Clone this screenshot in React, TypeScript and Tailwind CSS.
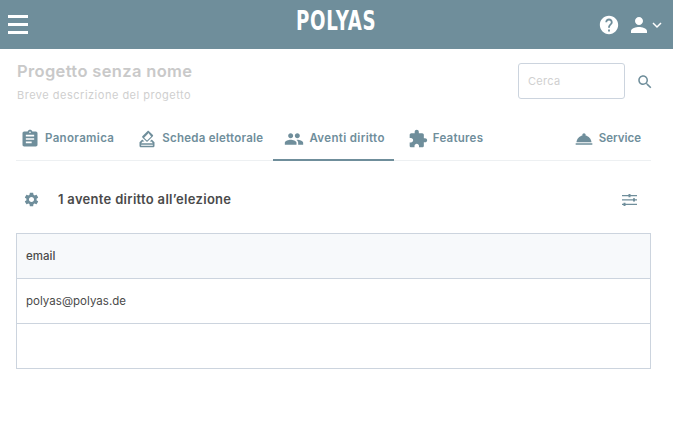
const slate = "#6f8e9b";

function Icon({ d, className }: { d: string; className?: string }) {
  return (
    <svg viewBox="0 0 24 24" fill="currentColor" className={className}>
      <path d={d} />
    </svg>
  );
}

const icons = {
  assignment:
    "M19 3h-4.18C14.4 1.84 13.3 1 12 1c-1.3 0-2.4.84-2.82 2H5c-1.1 0-2 .9-2 2v14c0 1.1.9 2 2 2h14c1.1 0 2-.9 2-2V5c0-1.1-.9-2-2-2zm-7 0c.55 0 1 .45 1 1s-.45 1-1 1-1-.45-1-1 .45-1 1-1zm2 14H7v-2h7v2zm3-4H7v-2h10v2zm0-4H7V7h10v2z",
  vote:
    "M18 13h-.68l-2 2h1.91L19 17H5l1.78-2h2.05l-2-2H6l-3 3v4c0 1.1.89 2 1.99 2H19c1.1 0 2-.89 2-2v-4l-3-3zm1 7H5v-1h14v1zm-7.66-4.98c.39.39 1.02.39 1.41 0l6.36-6.36c.39-.39.39-1.02 0-1.41L14.16 2.3c-.38-.4-1.01-.4-1.4-.01L6.39 8.66c-.39.39-.39 1.02 0 1.41l4.95 4.95zm2.12-10.61L17 8.95l-4.95 4.95-3.54-3.54 4.95-4.95z",
  people:
    "M16 11c1.66 0 2.99-1.34 2.99-3S17.66 5 16 5c-1.66 0-3 1.34-3 3s1.34 3 3 3zm-8 0c1.66 0 2.99-1.34 2.99-3S9.66 5 8 5C6.34 5 5 6.34 5 8s1.34 3 3 3zm0 2c-2.33 0-7 1.17-7 3.5V19h14v-2.5c0-2.33-4.67-3.5-7-3.5zm8 0c-.29 0-.62.02-.97.05 1.16.84 1.97 1.97 1.97 3.45V19h6v-2.5c0-2.33-4.67-3.5-7-3.5z",
  extension:
    "M20.5 11H19V7c0-1.1-.9-2-2-2h-4V3.5C13 2.12 11.88 1 10.5 1S8 2.12 8 3.5V5H4c-1.1 0-1.99.9-1.99 2v3.8H3.5c1.49 0 2.7 1.21 2.7 2.7s-1.21 2.7-2.7 2.7H2V20c0 1.1.9 2 2 2h3.8v-1.5c0-1.49 1.21-2.7 2.7-2.7 1.49 0 2.7 1.21 2.7 2.7V22H17c1.1 0 2-.9 2-2v-4h1.5c1.38 0 2.5-1.12 2.5-2.5S21.88 11 20.5 11z",
  service:
    "M2 17h20v2H2zm11.84-9.21c.1-.24.16-.51.16-.79 0-1.1-.9-2-2-2s-2 .9-2 2c0 .28.06.55.16.79C6.25 8.6 3.27 11.93 3 16h18c-.27-4.07-3.25-7.4-7.16-8.21z",
  settings:
    "M19.14 12.94c.04-.3.06-.61.06-.94 0-.32-.02-.64-.07-.94l2.03-1.58c.18-.14.23-.41.12-.61l-1.92-3.32c-.12-.22-.37-.29-.59-.22l-2.39.96c-.5-.38-1.03-.7-1.62-.94l-.36-2.54c-.04-.24-.24-.41-.48-.41h-3.84c-.24 0-.43.17-.47.41l-.36 2.54c-.59.24-1.13.57-1.62.94l-2.39-.96c-.22-.08-.47 0-.59.22L2.74 8.87c-.12.21-.08.47.12.61l2.03 1.58c-.05.3-.09.63-.09.94s.02.64.07.94l-2.03 1.58c-.18.14-.23.41-.12.61l1.92 3.32c.12.22.37.29.59.22l2.39-.96c.5.38 1.03.7 1.62.94l.36 2.54c.05.24.24.41.48.41h3.84c.24 0 .44-.17.47-.41l.36-2.54c.59-.24 1.13-.56 1.62-.94l2.39.96c.22.08.47 0 .59-.22l1.92-3.32c.12-.22.07-.47-.12-.61l-2.01-1.58zM12 15.6c-1.98 0-3.6-1.62-3.6-3.6s1.62-3.6 3.6-3.6 3.6 1.62 3.6 3.6-1.62 3.6-3.6 3.6z",
  help:
    "M12 2C6.48 2 2 6.48 2 12s4.48 10 10 10 10-4.48 10-10S17.52 2 12 2zm1 17h-2v-2h2v2zm2.07-7.75l-.9.92C13.45 12.9 13 13.5 13 15h-2v-.5c0-1.1.45-2.1 1.17-2.83l1.24-1.26c.37-.36.59-.86.59-1.41 0-1.1-.9-2-2-2s-2 .9-2 2H8c0-2.21 1.79-4 4-4s4 1.79 4 4c0 .88-.36 1.68-.93 2.25z",
  person:
    "M12 12c2.21 0 4-1.79 4-4s-1.79-4-4-4-4 1.79-4 4 1.79 4 4 4zm0 2c-2.67 0-8 1.34-8 4v2h16v-2c0-2.66-5.33-4-8-4z",
  search:
    "M15.5 14h-.79l-.28-.27C15.41 12.59 16 11.11 16 9.5 16 5.91 13.09 3 9.5 3S3 5.91 3 9.5 5.91 16 9.5 16c1.61 0 3.09-.59 4.23-1.57l.27.28v.79l5 4.99L20.49 19l-4.99-5zm-6 0C7.01 14 5 11.99 5 9.5S7.01 5 9.5 5 14 7.01 14 9.5 11.99 14 9.5 14z",
};

function Tab({ icon, label, active, className }: { icon: string; label: string; active?: boolean; className?: string }) {
  return (
    <div
      className={`-mb-px flex h-[47px] items-center gap-[5px] border-b-2 pt-1 text-[11.5px] font-semibold ${
        active ? "border-[#6f8e9b]" : "border-transparent"
      } ${className ?? ""}`}
    >
      <Icon d={icon} className="h-5 w-5 shrink-0" />
      <span>{label}</span>
    </div>
  );
}

export default function App() {
  return (
    <div className="min-h-[440px] bg-white font-['Inter',sans-serif]" style={{ color: slate }}>
      <header className="relative flex h-[49px] items-center justify-between bg-[#6f8e9b] pl-2 pr-[10px] text-white">
        <div className="flex w-5 flex-col gap-[5.5px]">
          <div className="h-[2.5px] bg-white" />
          <div className="h-[2.5px] bg-white" />
          <div className="h-[2.5px] bg-white" />
        </div>
        <span className="absolute left-[296px] top-[5px] origin-left scale-x-[0.7] font-['DejaVu_Sans',sans-serif] text-[26px] font-bold leading-[32px] tracking-[1px]">
          POLYAS
        </span>
        <div className="flex items-center">
          <Icon d={icons.help} className="h-[22px] w-[22px]" />
          <Icon d={icons.person} className="ml-[7px] h-6 w-6" />
          <svg viewBox="0 0 12 12" className="h-3 w-3" fill="none" stroke="currentColor" strokeWidth="1.5">
            <path d="M2 4l4 4 4-4" />
          </svg>
        </div>
      </header>

      <main className="pl-4 pr-[22px]">
        <div className="flex items-start justify-between pt-[14px]">
          <div className="pl-px">
            <h1 className="text-[16.5px] font-semibold leading-[16px] tracking-[0.35px] text-[#c9c9c9]">Progetto senza nome</h1>
            <p className="mt-[9px] text-[11px] leading-[14px] tracking-[0.5px] text-[#cfcfcf]">Breve descrizione del progetto</p>
          </div>
          <div className="flex items-center">
            <div className="flex h-9 w-[107px] items-center rounded-[3px] border border-[#ccd4de] pl-[9px] text-[11px] tracking-[0.3px] text-[#d0d0d0]">
              Cerca
            </div>
            <Icon d={icons.search} className="ml-[11px] mr-[-3px] mt-[2px] h-[18px] w-[18px]" />
          </div>
        </div>

        <nav className="mt-3 flex border-b border-[#edf0f2]">
          <Tab icon={icons.assignment} label="Panoramica" className="pl-1 pr-[12px] tracking-[0.35px]" />
          <Tab icon={icons.vote} label="Scheda elettorale" className="pl-[11px] pr-[10px] tracking-[0.25px]" />
          <Tab icon={icons.people} label="Aventi diritto" active className="pl-[11px] pr-[9px] tracking-[0.35px]" />
          <Tab icon={icons.extension} label="Features" className="pl-[14px] tracking-[0.25px]" />
          <Tab icon={icons.service} label="Service" className="ml-auto pr-[10px] tracking-[0px]" />
        </nav>

        <div className="flex h-[72px] items-center justify-between pl-[7px] pr-[14px] pt-[5px]">
          <div className="flex items-center gap-[18px]">
            <Icon d={icons.settings} className="h-[17px] w-[17px]" />
            <span className="text-[13px] font-semibold tracking-[0.3px] text-[#4a4a4a]">1 avente diritto all’elezione</span>
          </div>
          <svg viewBox="0 0 15 12" className="h-3 w-[15px]" fill="currentColor">
            <path d="M0 1h15v1.3H0zM0 5.3h15v1.3H0zM0 9.7h15V11H0z" />
            <path d="M6.5 0h2v3.3h-2zM11 4.3h2v3.3h-2zM1.5 8.7h2V12h-2z" />
          </svg>
        </div>

        <div className="border border-b-0 border-[#ccd4de] text-[11.5px] tracking-[0.03px] text-[#4a4a4a]">
          <div className="flex h-[45px] items-center border-b border-[#ccd4de] bg-[#f7f9fb] px-[9px] pt-px font-medium">email</div>
          <div className="flex h-[45px] items-center border-b border-[#ccd4de] px-[9px] pt-px">polyas@polyas.de</div>
          <div className="h-[45px] border-b border-[#ccd4de]" />
        </div>
      </main>
    </div>
  );
}
